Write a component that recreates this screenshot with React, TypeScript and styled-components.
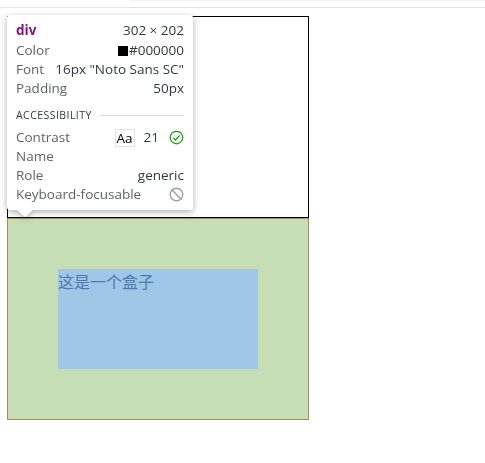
import styled, { createGlobalStyle } from "styled-components";
import { Ban } from "lucide-react";

const GlobalStyle = createGlobalStyle`
  html, body {
    margin: 0;
    padding: 0;
    background: #ffffff;
  }
  body {
    font-family: "Noto Sans CJK SC", sans-serif;
    font-size: 16px;
  }
`;

const Page = styled.div`
  position: relative;
  width: 485px;
  height: 463px;
  overflow: hidden;
`;

const TopBar = styled.div`
  height: 7px;
  border-bottom: 1px solid #e3e3e3;
  display: flex;
  justify-content: flex-end;
`;

const TopTab = styled.div`
  width: 355px;
  height: 1px;
  background: #eef3fb;
`;

const Stage = styled.div`
  padding: 8px 0 0 7px;
`;

const PlainBox = styled.div`
  box-sizing: border-box;
  width: 302px;
  height: 202px;
  border: 1px solid #000000;
  background: #ffffff;
`;

const MarginBox = styled.div`
  box-sizing: border-box;
  width: 302px;
  height: 202px;
  padding: 50px;
  border: 1px solid #9e9155;
  background: #c5deb6;
`;

const ContentBox = styled.div`
  width: 200px;
  height: 100px;
  background: #a0c6e8;
  color: #4b7cab;
  font-family: "Noto Sans CJK SC", sans-serif;
  font-size: 16px;
  line-height: 24px;
`;

const Tooltip = styled.div`
  position: absolute;
  left: 7px;
  top: 15px;
  box-sizing: border-box;
  width: 186px;
  height: 195px;
  padding: 5px 9px 0;
  background: #ffffff;
  border-radius: 3px;
  filter: drop-shadow(0 2px 3px rgba(60, 64, 67, 0.42));
  font-family: "Open Sans", "Liberation Sans", sans-serif;
  font-size: 13.5px;
  line-height: 19px;
  color: #202124;

  &::after {
    content: "";
    position: absolute;
    left: 10px;
    bottom: -7px;
    width: 16px;
    height: 7px;
    background: #ffffff;
    clip-path: polygon(0 0, 100% 0, 50% 100%);
  }
`;

const Row = styled.div`
  display: flex;
  justify-content: space-between;
  align-items: center;
  height: 19px;
  white-space: nowrap;
`;

const HeaderRow = styled(Row)`
  height: 21px;
`;

const TagName = styled.span`
  color: #881280;
  font-weight: 700;
`;

const Label = styled.span`
  color: #5f6368;
`;

const Value = styled.span`
  display: inline-flex;
  align-items: center;
  color: #303942;
`;

const Swatch = styled.span`
  width: 10px;
  height: 10px;
  margin-right: 1px;
  background: #000000;
`;

const SectionRow = styled.div`
  display: flex;
  align-items: center;
  gap: 8px;
  height: 16px;
  margin-top: 9px;
  margin-bottom: 5px;
  font-size: 10.5px;
  letter-spacing: 0.45px;
  color: #303942;
`;

const Divider = styled.span`
  flex: 1;
  height: 1px;
  background: #dadce0;
`;

const ContrastValue = styled.span`
  display: inline-flex;
  align-items: center;
  color: #303942;
`;

const AaBadge = styled.span`
  box-sizing: border-box;
  width: 20px;
  height: 18px;
  line-height: 16px;
  text-align: center;
  border: 1px solid #e3e3e3;
  color: #000000;
  margin-right: 9px;
`;

const Ratio = styled.span`
  margin-right: 10px;
`;

const PassIcon = () => (
  <svg width="15" height="15" viewBox="0 0 24 24" fill="none" stroke="#0ca40c" strokeWidth="2">
    <circle cx="12" cy="12" r="10" />
    <path d="M7 12.5l3.5 3.5 6.5-7.5" />
  </svg>
);

const Home = () => {
  return (
    <Page>
      <GlobalStyle />
      <TopBar>
        <TopTab />
      </TopBar>
      <Stage>
        <PlainBox />
        <MarginBox>
          <ContentBox>这是一个盒子</ContentBox>
        </MarginBox>
      </Stage>
      <Tooltip>
        <HeaderRow>
          <TagName>div</TagName>
          <Value>302 × 202</Value>
        </HeaderRow>
        <Row>
          <Label>Color</Label>
          <Value>
            <Swatch />
            #000000
          </Value>
        </Row>
        <Row>
          <Label>Font</Label>
          <Value>16px "Noto Sans SC"</Value>
        </Row>
        <Row>
          <Label>Padding</Label>
          <Value>50px</Value>
        </Row>
        <SectionRow>
          ACCESSIBILITY
          <Divider />
        </SectionRow>
        <Row>
          <Label>Contrast</Label>
          <ContrastValue>
            <AaBadge>Aa</AaBadge>
            <Ratio>21</Ratio>
            <PassIcon />
          </ContrastValue>
        </Row>
        <Row>
          <Label>Name</Label>
        </Row>
        <Row>
          <Label>Role</Label>
          <Value>generic</Value>
        </Row>
        <Row>
          <Label>Keyboard-focusable</Label>
          <Ban size={15} color="#9aa0a6" strokeWidth={2.2} />
        </Row>
      </Tooltip>
    </Page>
  );
};

export default Home;
